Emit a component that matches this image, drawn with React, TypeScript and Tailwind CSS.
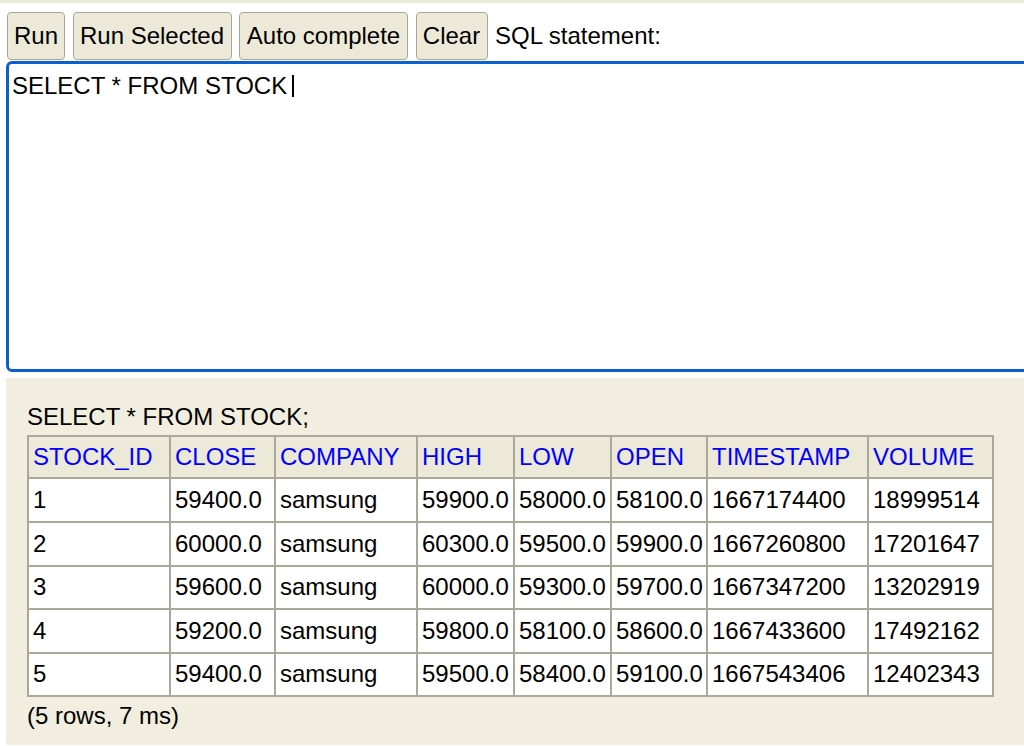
import React from "react";

const headers = ["STOCK_ID", "CLOSE", "COMPANY", "HIGH", "LOW", "OPEN", "TIMESTAMP", "VOLUME"];
const rows = [
  ["1", "59400.0", "samsung", "59900.0", "58000.0", "58100.0", "1667174400", "18999514"],
  ["2", "60000.0", "samsung", "60300.0", "59500.0", "59900.0", "1667260800", "17201647"],
  ["3", "59600.0", "samsung", "60000.0", "59300.0", "59700.0", "1667347200", "13202919"],
  ["4", "59200.0", "samsung", "59800.0", "58100.0", "58600.0", "1667433600", "17492162"],
  ["5", "59400.0", "samsung", "59500.0", "58400.0", "59100.0", "1667543406", "12402343"],
];
const rowHeights = ["h-[44px]", "h-[44px]", "h-[43px]", "h-[44px]", "h-[43px]"];

function Btn({ label, w }: { label: string; w: string }) {
  return (
    <button
      className={`${w} h-[48px] shrink-0 rounded-[4px] border border-[#a9a698] bg-[#ece9d8] text-center text-[24px] leading-none text-black`}
    >
      {label}
    </button>
  );
}

export default function App() {
  return (
    <div
      className="w-[1024px] h-[746px] overflow-hidden bg-white text-black"
      style={{ fontFamily: '"Liberation Sans", Arial, sans-serif' }}
    >
      <div className="h-[3px] bg-[#ece9d8]" />
      <div className="flex items-center gap-[7.5px] pl-[7px] pt-[9px]">
        <Btn label="Run" w="w-[58px]" />
        <Btn label="Run Selected" w="w-[159px]" />
        <Btn label="Auto complete" w="w-[169px]" />
        <Btn label="Clear" w="w-[72px]" />
        <span className="text-[24px] leading-none">SQL statement:</span>
      </div>
      <div className="mt-px ml-[6px] w-[1030px] h-[311px] rounded-[6px] border-[3px] border-[#0a60d0] pl-[3px] pt-[8px]">
        <div className="flex items-center text-[24px] leading-[27.6px]">
          <span>SELECT * FROM STOCK</span>
          <span className="ml-[5px] inline-block h-[22px] w-[2px] bg-black" />
        </div>
      </div>
      <div className="mt-[6px] ml-[6px] h-[367px] bg-[#f1eee0] pl-[21px] pt-[25px]">
        <div className="text-[24px] leading-[27.6px]">SELECT * FROM STOCK;</div>
        <div className="mt-[4px] inline-grid grid-cols-[142px_105px_142px_97px_97px_96px_161px_125px] border-l-2 border-t-2 border-[#aca899] text-[24px] leading-[27.6px]">
          {headers.map((h) => (
            <div
              key={h}
              className="flex h-[42px] items-center border-b-2 border-r-2 border-[#aca899] bg-[#ece9d8] pl-[4px] text-[#0000ff]"
            >
              {h}
            </div>
          ))}
          {rows.map((r, i) =>
            r.map((c, j) => (
              <div
                key={`${i}-${j}`}
                className={`flex ${rowHeights[i]} items-center border-b-2 border-r-2 border-[#aca899] bg-white pl-[4px]`}
              >
                {c}
              </div>
            ))
          )}
        </div>
        <div className="mt-[5px] text-[24px] leading-[27.6px]">(5 rows, 7 ms)</div>
      </div>
    </div>
  );
}
